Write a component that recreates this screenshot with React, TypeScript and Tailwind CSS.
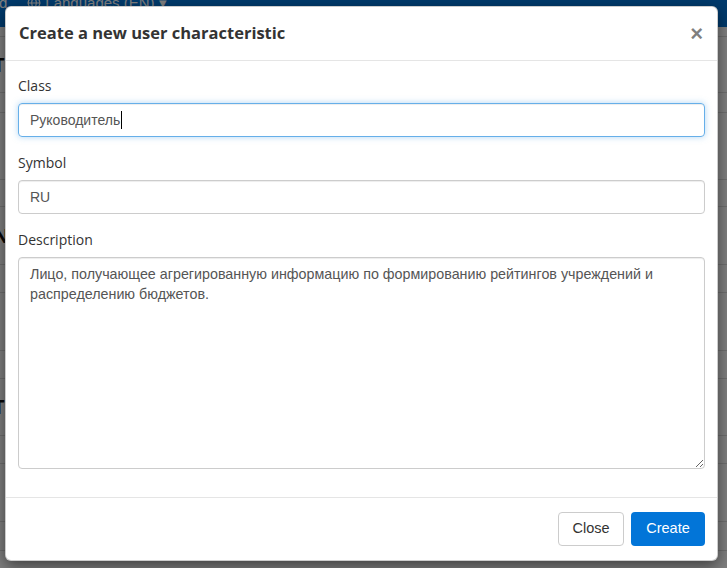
import React from "react";
import { Globe } from "lucide-react";

const uiFont = { fontFamily: '"Open Sans", "Noto Sans", sans-serif' };
const inputFont = { fontFamily: '"Liberation Sans", Arial, sans-serif' };

const rows = [
  { h: "h-[10px]", mark: "" },
  { h: "h-[56px]", mark: "T" },
  { h: "h-[20px]", mark: "" },
  { h: "h-[67px]", mark: "(" },
  { h: "h-[27px]", mark: "" },
  { h: "h-[58px]", mark: "N" },
  { h: "h-[28px]", mark: "" },
  { h: "h-[58px]", mark: "I" },
  { h: "h-[28px]", mark: "" },
  { h: "h-[57px]", mark: "T" },
  { h: "h-[28px]", mark: "" },
  { h: "h-[58px]", mark: "I" },
  { h: "h-[29px]", mark: "" },
  { h: "h-[40px]", mark: "" },
];

function BackgroundPage() {
  return (
    <div className="h-[568px] bg-white">
      <div className="h-[27px] bg-[#0275d8] flex items-start gap-[20px] text-white text-[15px]" style={inputFont}>
        <span className="-mt-[8px] -ml-[6px]">rd</span>
        <span className="-mt-[8px] flex items-center gap-[4px]">
          <Globe size={14} />
          Languages (EN) ▾
        </span>
      </div>
      {rows.map((r, i) => (
        <div key={i} className={`${r.h} border-b border-[#ddd] flex items-center`}>
          <span className="-ml-[7px] text-[20px] font-bold text-[#111]" style={uiFont}>
            {r.mark}
          </span>
        </div>
      ))}
    </div>
  );
}

function Field({ label, children }: { label: string; children: React.ReactNode }) {
  return (
    <div className="mb-[15px]">
      <label className="block h-[20px] leading-[21px] mb-[8px] text-[14px] text-[#333]" style={uiFont}>
        {label}
      </label>
      {children}
    </div>
  );
}

export default function App() {
  return (
    <div className="relative h-[568px] overflow-hidden">
      <BackgroundPage />

      <div className="absolute inset-0 bg-black/50">
        <div className="mt-[6px] ml-[5px] w-[713px] bg-white rounded-[6px] border border-black/20 shadow-[0_5px_15px_rgba(0,0,0,0.5)]">
          {/* Header */}
          <div className="h-[54px] px-[13px] flex items-center justify-between border-b border-[#e5e5e5]">
            <h4 className="text-[16.5px] font-bold text-[#333]" style={uiFont}>
              Create a new user characteristic
            </h4>
            <button className="text-[22px] leading-none font-bold text-black/50 mr-[1px]" style={inputFont}>
              ×
            </button>
          </div>

          {/* Body */}
          <div className="px-[12px] pt-[14px] pb-[13px]" style={inputFont}>
            <Field label="Class">
              <div className="h-[34px] px-[11px] flex items-center border border-[#66afe9] rounded-[4px] shadow-[inset_0_1px_1px_rgba(0,0,0,0.075),0_0_6px_rgba(102,175,233,0.5)] text-[14px] text-[#555]">
                Руководитель
                <span className="w-px h-[18px] bg-black ml-[1px]" />
              </div>
            </Field>
            <Field label="Symbol">
              <input
                readOnly
                value="RU"
                className="block w-full h-[34px] px-[11px] border border-[#ccc] rounded-[4px] shadow-[inset_0_1px_1px_rgba(0,0,0,0.075)] text-[14px] text-[#555] outline-none"
              />
            </Field>
            <Field label="Description">
              <textarea
                readOnly
                defaultValue="Лицо, получающее агрегированную информацию по формированию рейтингов учреждений и распределению бюджетов."
                className="block w-full h-[212px] px-[11px] py-[6px] leading-[20px] border border-[#ccc] rounded-[4px] shadow-[inset_0_1px_1px_rgba(0,0,0,0.075)] text-[14.3px] text-[#555] outline-none"
              />
            </Field>
          </div>

          {/* Footer */}
          <div className="px-[12px] pt-[14px] pb-[14px] border-t border-[#e5e5e5] flex justify-end gap-[7px]" style={inputFont}>
            <button className="h-[34px] w-[66px] border border-[#ccc] rounded-[4px] bg-white text-[14.5px] text-[#333]">
              Close
            </button>
            <button className="h-[34px] w-[74px] rounded-[4px] bg-[#0275d8] text-[14.5px] text-white">
              Create
            </button>
          </div>
        </div>
      </div>
    </div>
  );
}
